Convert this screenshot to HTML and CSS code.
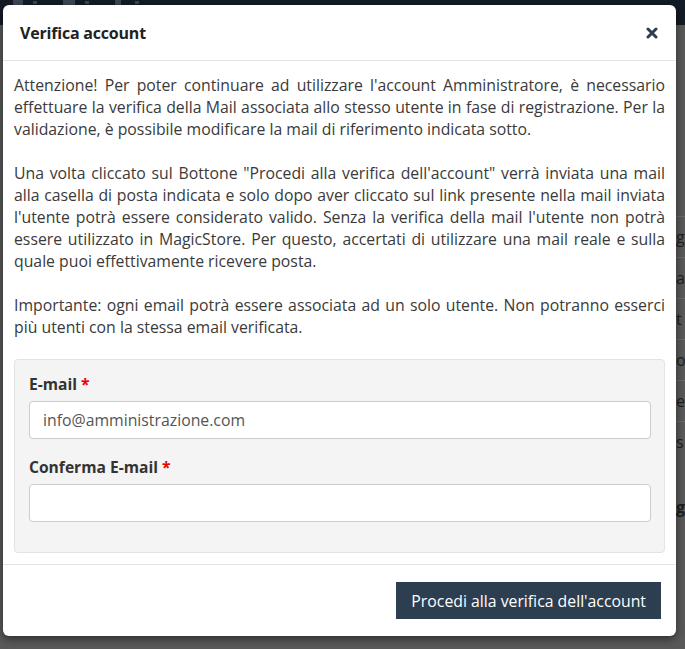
FILE: index.html
```html
<!DOCTYPE html>
<html lang="it">
<head>
<meta charset="utf-8">
<title>Verifica account</title>
<link rel="stylesheet" href="styles.css">
</head>
<body>
<div class="page">
  <div class="topbar">
    <span class="tb-icon tb-gear"></span>
    <span class="tb-caret c1"></span>
    <span class="tb-icon tb-bars"></span>
    <span class="tb-caret c2"></span>
    <span class="tb-icon tb-doc"></span>
    <span class="tb-caret c3"></span>
  </div>
  <div class="behind">
    <div class="rows">
      <div class="row"><span>g</span></div>
      <div class="row"><span>a</span></div>
      <div class="row"><span>t</span></div>
      <div class="row"><span>o</span></div>
      <div class="row"><span>e</span></div>
      <div class="row"><span>s</span></div>
      <div class="row last"><span class="b">g</span></div>
    </div>
  </div>

  <div class="modal">
    <div class="modal-header">
      <h4 class="modal-title">Verifica account</h4>
      <button class="close" type="button" aria-label="Chiudi">
        <svg width="12" height="12" viewBox="0 0 12 12"><path d="M2 2 L10 10 M10 2 L2 10" stroke="#2c3e50" stroke-width="3" stroke-linecap="round"/></svg>
      </button>
    </div>
    <div class="modal-body">
      <p class="msg">Attenzione! Per poter continuare ad utilizzare l'account Amministratore, è necessario effettuare la verifica della Mail associata allo stesso utente in fase di registrazione. Per la validazione, è possibile modificare la mail di riferimento indicata sotto.</p>
      <p class="msg">Una volta cliccato sul Bottone "Procedi alla verifica dell'account" verrà inviata una mail alla casella di posta indicata e solo dopo aver cliccato sul link presente nella mail inviata l'utente potrà essere considerato valido. Senza la verifica della mail l'utente non potrà essere utilizzato in MagicStore. Per questo, accertati di utilizzare una mail reale e sulla quale puoi effettivamente ricevere posta.</p>
      <p class="msg">Importante: ogni email potrà essere associata ad un solo utente. Non potranno esserci più utenti con la stessa email verificata.</p>
      <div class="well">
        <div class="group">
          <label class="lbl">E-mail <span class="req">*</span></label>
          <input class="input" type="text" value="info@amministrazione.com">
        </div>
        <div class="group">
          <label class="lbl">Conferma E-mail <span class="req">*</span></label>
          <input class="input" type="text" value="">
        </div>
      </div>
    </div>
    <div class="modal-footer">
      <button class="btn" type="button">Procedi alla verifica dell'account</button>
    </div>
  </div>
</div>
</body>
</html>
```
FILE: styles.css
```css
* { box-sizing: border-box; }
html, body { margin: 0; padding: 0; }
body {
  width: 685px;
  height: 649px;
  overflow: hidden;
  background: #585858;
  font-family: "Open Sans", "Liberation Sans", sans-serif;
}
.page {
  position: relative;
  width: 685px;
  height: 649px;
  background: #595959;
}
.topbar {
  height: 25px;
  background: #131b25;
  display: flex;
  align-items: flex-start;
  padding-left: 13px;
}
.tb-icon { display: block; width: 10px; height: 5px; background: #3d4652; }
.tb-caret { display: block; width: 4px; height: 3px; background: #3d4652; margin-top: 1px; }
.c1 { margin-left: 10px; margin-right: 26px; }
.tb-bars { width: 12px; }
.c2 { margin-left: 10px; margin-right: 26px; }
.tb-doc { width: 6px; }
.c3 { margin-left: 14px; }
.behind {
  display: flex;
  justify-content: flex-end;
  padding-top: 191px;
}
.rows { width: 9px; overflow: hidden; }
.row {
  height: 41px;
  border-top: 1px solid #6b6b6b;
  font-size: 16px;
  color: #1e1e1e;
  display: flex;
  align-items: center;
}
.row .b { font-weight: 700; }
.row.last { border-top: none; height: 90px; }

.modal {
  position: absolute;
  left: 3px;
  top: 5px;
  width: 673px;
  background: #fff;
  border-radius: 6px;
  box-shadow: 0 3px 9px rgba(0,0,0,0.5);
}
.modal-header {
  height: 56px;
  padding: 0 17px;
  display: flex;
  align-items: center;
  justify-content: space-between;
  border-bottom: 1px solid #e5e5e5;
}
.modal-title {
  margin: 0;
  font-size: 16px;
  font-weight: 700;
  color: #222;
  letter-spacing: -0.2px;
}
.close {
  border: 0;
  background: none;
  padding: 0;
  margin-right: 1px;
  display: flex;
}
.modal-body {
  padding: 13px 11px 11px 11px;
}
.msg {
  margin: 0 0 22px 0;
  font-size: 15.8px;
  line-height: 22px;
  color: #3a3a3a;
  text-align: justify;
}
.msg:last-of-type { margin-bottom: 21px; }
.well {
  background: #f4f4f4;
  border: 1px solid #e3e3e3;
  border-radius: 4px;
  padding: 13px 13px 30px 14px;
}
.group { display: flex; flex-direction: column; }
.group + .group { margin-top: 17px; }
.lbl {
  font-size: 15.6px;
  font-weight: 700;
  color: #333;
  margin-bottom: 6px;
  line-height: 22px;
}
.req { color: #e00; }
.input {
  height: 38px;
  width: 100%;
  border: 1px solid #ccc;
  border-radius: 4px;
  background: #fff;
  padding: 0 13px;
  font-family: "Open Sans", "Liberation Sans", sans-serif;
  font-size: 15.8px;
  color: #555;
}
.modal-footer {
  border-top: 1px solid #e5e5e5;
  padding: 17px 15px 17px 15px;
  display: flex;
  justify-content: flex-end;
}
.btn {
  height: 37px;
  padding: 0 15px;
  border: 0;
  border-radius: 0;
  background: #2c3e50;
  color: #fff;
  font-family: "Open Sans", "Liberation Sans", sans-serif;
  font-size: 15.8px;
}
```
